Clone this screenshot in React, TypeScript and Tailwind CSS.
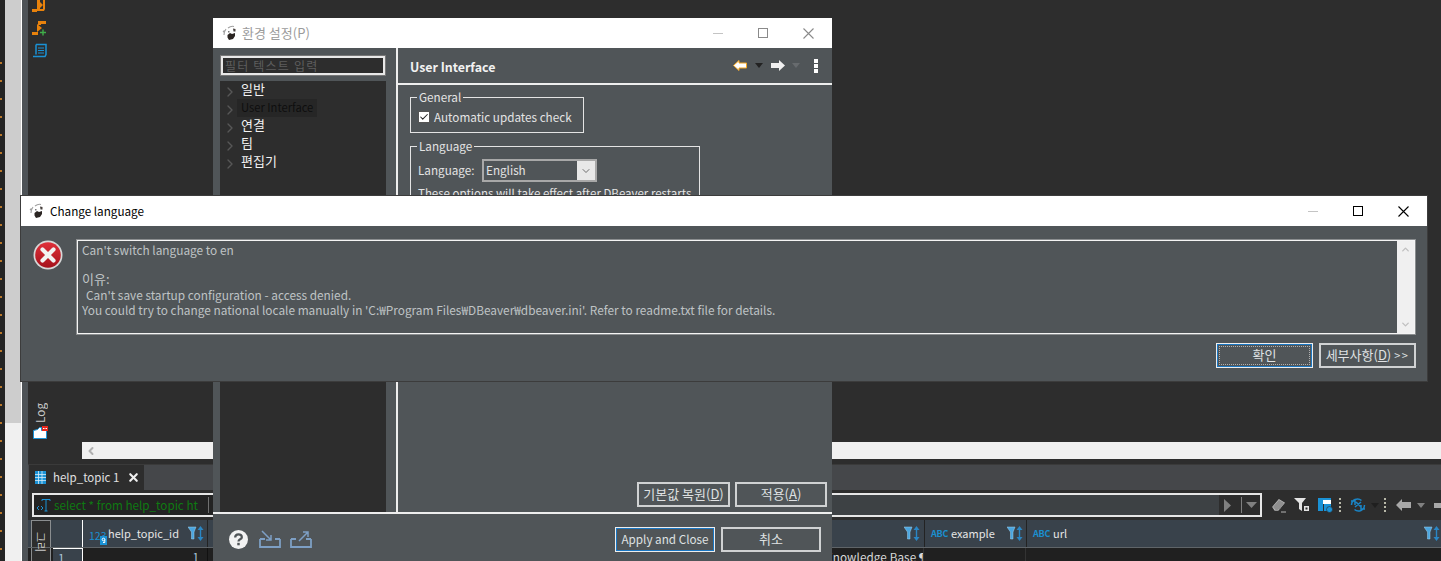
import { ChevronRight, ChevronDown, ChevronUp, ChevronLeft, X, Check } from 'lucide-react';
import type { ReactNode } from 'react';

const font = "font-['Noto_Sans_CJK_KR','Noto_Sans',sans-serif]";

function Bear() {
  return (
    <svg width="16" height="16" viewBox="0 0 16 16" className="shrink-0">
      <path d="M2 10c0-2 .5-4 2-6M1 7l1.500-1.500M6 3c2-1.500 4-2 6-1.500" fill="none" stroke="#a0a0a0" strokeWidth="1.100" />
      <path d="M11 3.500l2.500.500 0 2.500-2 0z" fill="#4a4340" />
      <path d="M5.500 10l2.500-2 2 1 3-1 0 3-2 3-4 1-1.500-2.500z" fill="#2b2522" />
      <path d="M6 6h1.500v1.500H6z" fill="#777" />
    </svg>
  );
}

function WinButtons({ dim }: { dim?: boolean }) {
  const color = dim ? '#8a8a8a' : '#000000';
  return (
    <div className="flex items-center gap-[35px]">
      <div className="w-[10px] h-[1px] bg-[#c4c4c4]" />
      <div className={`w-[10px] h-[10px] border ${dim ? 'border-[#8a8a8a]' : 'border-black'}`} />
      <svg width="11" height="11" viewBox="0 0 11 11">
        <path d="M0.500 0.500l10 10M10.500 0.500l-10 10" stroke={color} strokeWidth="1.100" />
      </svg>
    </div>
  );
}

function Btn({ label, focus, dotted, className = '' }: { label: ReactNode; focus?: boolean; dotted?: boolean; className?: string }) {
  return (
    <div
      className={`h-[25px] flex items-center justify-center text-[#dfe1e2] text-[11.7px] ${
        focus ? 'border border-[#eeeeee] shadow-[inset_0_0_0_1px_#1b78c4]' : 'border-2 border-[#d0d2d3]'
      } ${dotted ? 'outline-1 outline-dotted outline-[#b0b0b0] outline-offset-[-4px]' : ''} ${className}`}
    >
      <span className="mb-[1px]">{label}</span>
    </div>
  );
}

function FilterSort() {
  return (
    <svg width="16" height="15" viewBox="0 0 16 15" className="shrink-0">
      <path d="M0 1h8L6 6v7H3.500V6z" fill="#4aa5e0" stroke="#9fd0ee" strokeWidth="0.500" />
      <path d="M12.500 0l-3 4h6zM12.500 15l-3-4h6z" fill="#2a86c4" />
      <rect x="11.800" y="4" width="1.400" height="7" fill="#2a86c4" />
    </svg>
  );
}

function AbcIcon() {
  return <span className="text-[#1a8fd0] text-[9px] leading-none font-bold tracking-[-0.2px] w-[16px] shrink-0">ABC</span>;
}

function Background() {
  return (
    <div className="absolute inset-0 flex bg-[#2d2d2d]">
      <div className="w-[5px] bg-[#242424] flex flex-col gap-[16px] pt-[62px] overflow-hidden shrink-0">
        {Array.from({ length: 30 }).map((_, i) => (
          <div key={i} className="w-[2px] h-[2px] bg-[#b9772a] shrink-0" />
        ))}
      </div>
      <div className="w-[16px] bg-[#f0f0f0] shrink-0">
        <div className="h-[423px] bg-[#cdcdcd]" />
      </div>
      <div className="w-[1px] bg-white shrink-0" />
      <div className="w-[6px] bg-[#4d5256] shrink-0" />
      <div className="flex-1 flex flex-col min-w-0">
        <div className="h-[442px] flex flex-col pl-[4px]">
          <svg width="16" height="60" viewBox="0 0 16 60">
            <path d="M5 0h3v9H5zM11 0h2v9l-1 2H5v-2h6z" fill="#e8820c" />
            <path d="M7 1l4 4-4 4z" fill="#e8820c" />
            <rect x="0" y="9" width="5" height="3" fill="#e8820c" />
            <path d="M6 21h8v3h-5v1H6z" fill="#e8820c" />
            <path d="M5 24l5 4-5 4z" fill="#e8820c" />
            <rect x="0" y="32" width="6" height="3" fill="#e8820c" />
            <path d="M8 32.500h6M11 29.500v6" stroke="#3fae49" strokeWidth="1.400" />
            <path d="M4 44.500h10v10l-1 2H1" fill="none" stroke="#1a92d6" strokeWidth="1.500" />
            <path d="M4 44.500v10" stroke="#1a92d6" strokeWidth="1.500" />
            <path d="M6 48h6M6 50.500h6M6 53h6" stroke="#1a92d6" strokeWidth="1" />
          </svg>
          <div className="mt-auto mb-[3px] flex flex-col items-start gap-[3px] ml-[1px]">
            <span className="text-[11.7px] text-[#c8c8c8] [writing-mode:vertical-rl] rotate-180 leading-[13px]">Log</span>
            <svg width="15" height="13" viewBox="0 0 15 13">
              <path d="M0.500 4.500l4-1 2-2h2v3h5v8h-13z" fill="#fff" stroke="#1a92d6" />
              <rect x="9" y="0" width="6" height="5" fill="#e8261c" />
              <path d="M10 2.500h1.500M12.500 2.500h1.500" stroke="#fff" />
            </svg>
          </div>
        </div>
        <div className="h-[17px] bg-[#f0f0f0] ml-[54px] flex items-center pl-[3px] shrink-0">
          <ChevronLeft size={12} strokeWidth={4} color="#b0b0b0" />
        </div>
        <div className="h-[5px] shrink-0" />
        <div className="h-[26px] bg-[#45474a] border-t border-[#3a3a3a] flex shrink-0">
          <div className="w-[115px] ml-[1px] bg-[#2d2d2d] flex items-center pl-[6px] text-[11.500px] text-[#e0e0e0]">
            <svg width="11" height="13" viewBox="0 0 11 13">
              <rect width="11" height="13" fill="#1a92d6" />
              <path d="M0 3.500h11M0 6.500h11M0 9.500h11M3.500 0v13M7 0v13" stroke="#d5ecf9" strokeWidth="0.800" />
            </svg>
            <span className="ml-[7px]">help_topic 1</span>
            <X size={13} strokeWidth={4} color="#f0f0f0" className="ml-[8px]" />
          </div>
        </div>
        <div className="h-[30px] bg-[#2d2d2d] flex items-center pl-[4px] overflow-hidden shrink-0">
          <div className="w-[1230px] shrink-0 h-[24px] border-2 border-[#e6e6e6] bg-[#3d4144] flex items-center text-[11.700px] text-[#0f7a12]">
            <div className="w-[190px] h-full bg-[#232323] flex items-center pl-[2px]">
              <svg width="15" height="15" viewBox="0 0 15 15" className="shrink-0">
                <path d="M3 8L1 10l2 2M5 8l2 2-2 2" fill="none" stroke="#1a92d6" strokeWidth="1" />
                <path d="M6 3V1.500h8V3M10 1.500V13M8.500 13h3" fill="none" stroke="#1a92d6" strokeWidth="1" />
              </svg>
              <span className="ml-[3px] whitespace-nowrap">select * from help_topic ht</span>
              <div className="w-[1px] h-[16px] bg-[#707070] ml-[10px] shrink-0" />
            </div>
            <div className="ml-auto flex items-center h-full w-[41px] bg-[#2d2d2d] pl-[5px]">
              <svg width="7" height="13" viewBox="0 0 7 13"><path d="M0 0l7 6.500-7 6.500z" fill="#808080" /></svg>
              <div className="w-[1px] h-[16px] bg-[#808080] ml-[10px]" />
              <svg width="11" height="6" viewBox="0 0 11 6" className="ml-[4px]"><path d="M0 0h11L5.500 6z" fill="#808080" /></svg>
            </div>
          </div>
          <svg width="14" height="15" viewBox="0 0 14 15" className="ml-[10px] shrink-0"><path d="M1 9l6-7 5 3-6 7H3z" fill="none" stroke="#b5b5b5" strokeWidth="1.400" /><path d="M1 9l3 3 4-1 4-6-5-3z" fill="#8f8f8f" /><path d="M9 14h5" stroke="#b5b5b5" /></svg>
          <svg width="15" height="14" viewBox="0 0 15 14" className="ml-[8px] shrink-0"><path d="M0 0h12L8 5v8L5 11V5z" fill="#e4e4e4" /><rect x="10" y="8" width="5" height="5" fill="#e4e4e4" /><rect x="11.500" y="9.500" width="2" height="2" fill="#2d2d2d" /></svg>
          <svg width="15" height="15" viewBox="0 0 15 15" className="ml-[9px] shrink-0"><rect width="13" height="13" fill="#1a92d6" /><rect x="5" y="2" width="8" height="4" fill="#fff" /><rect x="5" y="6" width="1" height="7" fill="#2d2d2d" /><circle cx="11.500" cy="11.500" r="3" fill="#1a92d6" stroke="#2d2d2d" strokeWidth="0.600" /></svg>
          <div className="ml-[6px] w-[2px] h-[14px] border-l-2 border-dotted border-[#b8b8a8] shrink-0" />
          <svg width="16" height="16" viewBox="0 0 16 16" className="ml-[9px] shrink-0"><path d="M1.500 8a6 6 0 0 1 10-4.500M14.500 8a6 6 0 0 1-10 4.500M6 5l5 5M5 10l6-5M1 4h4v4M15 12h-4V8" fill="none" stroke="#1a85c6" strokeWidth="1.500" /></svg>
          <svg width="8" height="5" viewBox="0 0 8 5" className="ml-[5px] shrink-0"><path d="M0 0h8L4 5z" fill="#1f1f1f" /></svg>
          <div className="ml-[5px] w-[2px] h-[14px] border-l-2 border-dotted border-[#b8b8a8] shrink-0" />
          <svg width="15" height="12" viewBox="0 0 15 12" className="ml-[10px] shrink-0"><path d="M6 0v3h9v6H6v3L0 6z" fill="#a8a8a8" /></svg>
          <svg width="8" height="5" viewBox="0 0 8 5" className="ml-[6px] shrink-0"><path d="M0 0h8L4 5z" fill="#808080" /></svg>
          <div className="ml-[9px] w-[10px] h-[5px] bg-[#a8a8a8] shrink-0" />
        </div>
        <div className="h-[28px] bg-[#39424b] border-b border-[#5f6468] flex text-[11px] text-[#e6e6e6] shrink-0">
          <div className="ml-[3px] w-[20px] bg-[#2d2d2d] border-x border-t border-[#8a8d8f] shrink-0" />
          <div className="ml-[2px] w-[30px] border-r border-white shrink-0" />
          <div className="w-[125px] border-r border-[#232323] flex items-center pl-[6px] shrink-0">
            <div className="relative w-[17px] h-[14px] shrink-0">
              <span className="text-[#1a8fd0] text-[10.500px] leading-[14px]">123</span>
              <svg width="7" height="9" viewBox="0 0 7 9" className="absolute right-[-1px] bottom-[-4px]">
                <rect width="7" height="9" fill="#1a92d6" />
                <circle cx="3.500" cy="3.500" r="1.300" fill="none" stroke="#fff" />
                <path d="M4.800 3.500v3H3" fill="none" stroke="#fff" />
              </svg>
            </div>
            <span className="ml-[2px]">help_topic_id</span>
            <span className="ml-auto mr-[3px] flex"><FilterSort /></span>
          </div>
          <div className="flex-1 flex items-center justify-end pr-[4px]"><FilterSort /></div>
          <div className="w-[102px] border-l border-[#232323] flex items-center pl-[6px] gap-[4px] shrink-0">
            <AbcIcon />
            <span>example</span>
            <span className="ml-auto mr-[3px] flex"><FilterSort /></span>
          </div>
          <div className="w-[415px] border-l border-[#232323] flex items-center pl-[6px] gap-[4px] shrink-0">
            <AbcIcon />
            <span>url</span>
            <span className="ml-auto mr-[1px] flex"><FilterSort /></span>
          </div>
        </div>
        <div className="flex-1 min-h-0 bg-[#202020] flex text-[11.700px] text-[#d8d8d8] overflow-hidden">
          <div className="ml-[3px] w-[20px] bg-[#2d2d2d] border-x border-[#8a8d8f] shrink-0" />
          <div className="ml-[2px] w-[30px] bg-[#39424b] border-t border-r border-white pl-[5px] text-[#a9c4d8] shrink-0">1</div>
          <div className="w-[125px] text-right pr-[8px] text-[#a9c4d8] border-r border-[#111] shrink-0">1</div>
          <div className="flex-1 flex justify-end border-r border-[#333]">
            <div className="w-[98px] overflow-hidden whitespace-nowrap tracking-[0.1px]">Knowledge Base¶To</div>
          </div>
          <div className="w-[102px] border-r border-[#333] shrink-0" />
          <div className="w-[415px] shrink-0" />
        </div>
      </div>
      <div className="absolute left-[31px] top-[532px] h-[29px] w-[20px] flex justify-center overflow-hidden text-[11px] text-[#c8c8c8] leading-[20px] [writing-mode:vertical-rl] [text-orientation:sideways]">그리드</div>
    </div>
  );
}

function Prefs() {
  return (
    <div className="absolute left-[213px] top-[18px] w-[619px] h-[543px] bg-[#505558] flex flex-col text-[11.700px] text-[#e4e4e4]">
      <div className="h-[30px] bg-white flex items-center pl-[9px] pr-[18px] shrink-0">
        <Bear />
        <span className="ml-[4px] text-[#9b9b9b] text-[13px]">환경 설정(P)</span>
        <div className="ml-auto"><WinButtons dim /></div>
      </div>
      <div className="flex-1 flex min-h-0">
        <div className="w-[183px] shrink-0 flex flex-col pl-[7px]">
          <div className="mt-[8px] h-[19px] w-[164px] ml-[1px] bg-[#2d2d2d] border-2 border-[#e8e8e8] outline outline-1 outline-[#777] text-[12px] text-[#5e5e5e] flex items-center pl-[2px] tracking-[1.200px]">필터 텍스트 입력</div>
          <div className="mt-[6px] flex-1 w-[166px] bg-[#2d2d2d]">
            {['일반', 'User Interface', '연결', '팀', '편집기'].map((t, i) => (
              <div key={t} className="h-[18px] flex items-center pl-[2px]">
                <ChevronRight size={16} strokeWidth={2} color="#575757" className="mt-[3px] shrink-0" />
                <span className={`ml-[-1px] px-[4px] h-[18px] leading-[16px] ${i === 1 ? 'bg-[#262626] text-[#0e0e0e] text-[11.200px]' : 'text-[#f2f2f2] text-[13px]'}`}>{t}</span>
              </div>
            ))}
          </div>
        </div>
        <div className="flex-1 border-l-2 border-[#eeeeee] flex flex-col min-w-0">
          <div className="h-[37px] border-b-2 border-[#eeeeee] flex items-center pl-[12px] pr-[14px] shrink-0">
            <span className="font-bold text-[12.400px] text-[#f2f2f2] mt-[3px]">User Interface</span>
            <div className="ml-auto flex items-center">
              <svg width="14" height="11" viewBox="0 0 14 11"><path d="M6 0.500v2.500h7.500v5H6v2.500L0.500 5.500z" fill="#fff" stroke="#f4a622" strokeWidth="1" /></svg>
              <svg width="8" height="5" viewBox="0 0 8 5" className="ml-[8px]"><path d="M0 0h8L4 5z" fill="#222" /></svg>
              <svg width="14" height="11" viewBox="0 0 14 11" className="ml-[8px]"><path d="M8 0v3H0v5h8v3l6-5.500z" fill="#f0f0f0" /></svg>
              <svg width="8" height="5" viewBox="0 0 8 5" className="ml-[7px]"><path d="M0 0h8L4 5z" fill="#676b6e" /></svg>
              <div className="flex flex-col gap-[1px] ml-[14px]">
                <div className="w-[4px] h-[4px] bg-white" /><div className="w-[4px] h-[4px] bg-white" /><div className="w-[4px] h-[4px] bg-white" />
              </div>
            </div>
          </div>
          <div className="flex-1 flex flex-col pl-[12px] min-h-0">
            <div className="relative mt-[12px] w-[174px] h-[36px] border border-[#e4e4e4] pl-[7px] pt-[3px] flex items-center gap-[4px]">
              <span className="absolute left-[6px] top-[-9px] bg-[#505558] px-[2px] leading-[16px]">General</span>
              <div className="w-[12px] h-[12px] border border-[#555] bg-white flex items-center justify-center">
                <Check size={10} strokeWidth={2.500} color="#222" />
              </div>
              <span>Automatic updates check</span>
            </div>
            <div className="relative mt-[13px] w-[290px] h-[90px] border border-[#e4e4e4] pl-[7px] pt-[12px]">
              <span className="absolute left-[6px] top-[-9px] bg-[#505558] px-[2px] leading-[16px]">Language</span>
              <div className="flex items-center">
                <span className="w-[64px] shrink-0 mb-[1px]">Language:</span>
                <div className="w-[115px] h-[23px] border-2 border-[#a8a8a8] flex items-center">
                  <span className="flex-1 pl-[2px] mb-[1px]">English</span>
                  <div className="w-[18px] h-full bg-[#e8e8e8] flex items-center justify-center"><ChevronDown size={12} strokeWidth={1.500} color="#444" /></div>
                </div>
              </div>
              <div className="mt-[3px] whitespace-nowrap text-[11.500px]">These options will take effect after DBeaver restarts</div>
            </div>
            <div className="mt-auto mb-[5px] flex justify-end gap-[5px] pr-[5px]">
              <Btn className="w-[93px] !text-[13px]" label={<span>기본값 복원(<u>D</u>)</span>} />
              <Btn className="w-[92px] !text-[13px]" label={<span>적용(<u>A</u>)</span>} />
            </div>
          </div>
        </div>
      </div>
      <div className="h-[49px] border-t-2 border-[#eeeeee] shrink-0 flex items-center pl-[16px] pr-[11px]">
        <svg width="19" height="19" viewBox="0 0 20 20" className="mt-[3px] shrink-0">
          <circle cx="10" cy="10" r="10" fill="#f2f2f2" />
          <path d="M6.500 8c0-4.500 7-4.500 7-.500 0 2.500-3.500 2-3.500 4.500" fill="none" stroke="#505558" strokeWidth="2.400" />
          <rect x="8.700" y="13.500" width="2.600" height="2.600" fill="#505558" />
        </svg>
        <svg width="22" height="18" viewBox="0 0 22 18" className="ml-[11px] mt-[3px]"><path d="M1 9v8h20V9M6 9H1M16 9h5" fill="none" stroke="#7d9fc4" strokeWidth="1.800" /><path d="M3 1l9 9M12 5v5H7" fill="none" stroke="#7d9fc4" strokeWidth="1.500" /></svg>
        <svg width="22" height="18" viewBox="0 0 22 18" className="ml-[9px] mt-[3px]"><path d="M1 9v8h20V9M6 9H1M16 9h5" fill="none" stroke="#7d9fc4" strokeWidth="1.800" /><path d="M9 11l9-9M13 2h5v5" fill="none" stroke="#7d9fc4" strokeWidth="1.500" /></svg>
        <div className="ml-auto flex gap-[6px] mt-[4px]">
          <Btn className="w-[100px]" focus label="Apply and Close" />
          <Btn className="w-[100px] !text-[13px]" label="취소" />
        </div>
      </div>
    </div>
  );
}

function ChangeLanguage() {
  return (
    <div className="absolute left-[21px] top-[196px] w-[1406px] h-[185px] bg-[#505558] flex flex-col text-[11.700px] shadow-[0_0_0_1px_#3c3c3c]">
      <div className="h-[30px] bg-white flex items-center pl-[8px] pr-[18px] shrink-0">
        <Bear />
        <span className="ml-[5px] text-black">Change language</span>
        <div className="ml-auto"><WinButtons /></div>
      </div>
      <div className="flex pl-[12px] pr-[12px] pt-[14px]">
        <svg width="30" height="30" viewBox="0 0 30 30" className="shrink-0">
          <defs>
            <linearGradient id="err" x1="0" y1="0" x2="0" y2="1">
              <stop offset="0" stopColor="#e0303a" />
              <stop offset="1" stopColor="#a5121c" />
            </linearGradient>
          </defs>
          <circle cx="15" cy="15" r="14.500" fill="#d8d8d8" />
          <circle cx="15" cy="15" r="12.800" fill="url(#err)" />
          <path d="M9.500 9.500l11 11M20.500 9.500l-11 11" stroke="#f2f2f2" strokeWidth="4.200" strokeLinecap="round" />
        </svg>
        <div className="ml-[14px] flex-1 h-[94px] border border-[#f4f4f4] outline outline-1 outline-[#8a8d8f] flex">
          <div className="flex-1 pl-[4px] pt-[1px] text-[#bfc3c5] text-[11.850px] leading-[15px]">
            <div>Can't switch language to en</div>
            <div className="h-[15px]" />
            <div className="text-[13px] h-[15px] -mt-[1px] mb-[1px]">이유:</div>
            <div className="pl-[4px]">Can't save startup configuration - access denied.</div>
            <div>You could try to change national locale manually in 'C:₩Program Files₩DBeaver₩dbeaver.ini'. Refer to readme.txt file for details.</div>
          </div>
          <div className="w-[17px] bg-[#f0f0f0] flex flex-col items-center justify-between py-[3px]">
            <ChevronUp size={11} strokeWidth={3} color="#c0c0c0" />
            <ChevronDown size={11} strokeWidth={3} color="#c0c0c0" />
          </div>
        </div>
      </div>
      <div className="flex justify-end gap-[6px] pr-[11px] mt-[9px]">
        <Btn className="w-[97px] !text-[13px]" focus dotted label="확인" />
        <Btn className="w-[97px] !text-[13px]" label={<span>세부사항(<u>D</u>) <span className="text-[11px] tracking-[1.500px]">&gt;&gt;</span></span>} />
      </div>
    </div>
  );
}

export default function App() {
  return (
    <div className={`relative w-[1441px] h-[561px] overflow-hidden ${font}`}>
      <Background />
      <Prefs />
      <ChangeLanguage />
    </div>
  );
}
